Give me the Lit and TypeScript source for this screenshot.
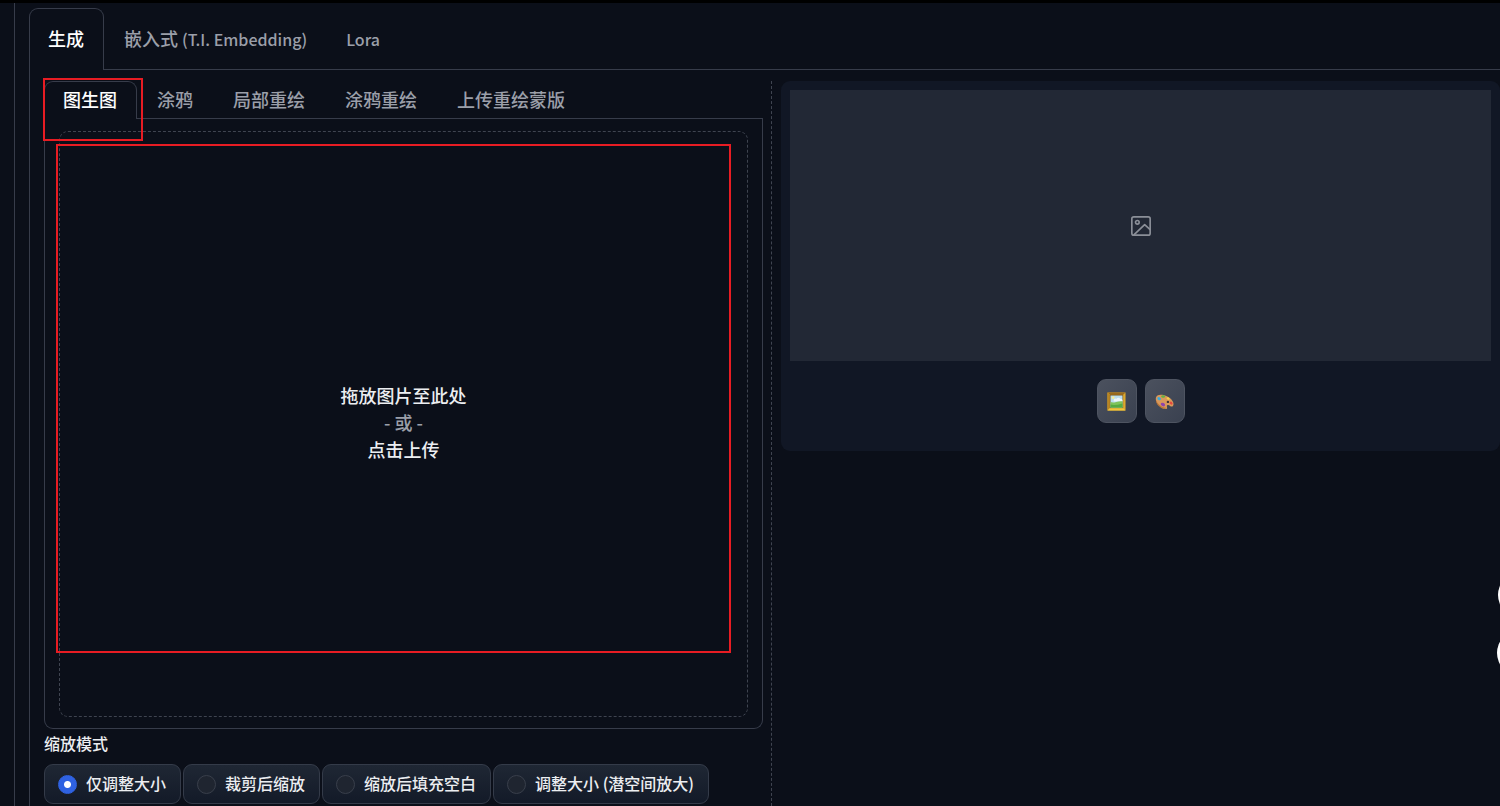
import { LitElement, html, css, svg } from "lit";
import { customElement, state } from "lit/decorators.js";

const imageIcon = svg`
  <svg class="placeholder-icon" viewBox="0 0 24 24" fill="none" stroke="currentColor" stroke-width="1.8" stroke-linecap="round" stroke-linejoin="round" aria-hidden="true">
    <rect x="2" y="2" width="20" height="20" rx="2.2"></rect>
    <circle cx="8" cy="8" r="2"></circle>
    <path d="M4.500 21.500 16 10.500l6 5.500"></path>
  </svg>`;

const frameIcon = svg`
  <svg class="emoji" viewBox="0 0 20 20" aria-hidden="true">
    <rect x="0.5" y="0.5" width="19" height="19" fill="#dca92f"></rect>
    <path d="M0.5 0.5h19l-3 3h-13z" fill="#9a6a1c"></path>
    <path d="M0.5 0.5l3 3v13l-3 3z" fill="#b98523"></path>
    <path d="M0.5 19.5l3-3h13l3 3z" fill="#f0c63c"></path>
    <rect x="3" y="3" width="14" height="14" fill="#7d591d"></rect>
    <rect x="3.7" y="3.7" width="12.6" height="12.6" fill="#b9def0"></rect>
    <circle cx="6.5" cy="6" r="1.5" fill="#f5ed9b"></circle>
    <path d="M7 8.2q1-2 3-1 2-2.5 4 0 1.5 0 2.3 1.3v1.5H7z" fill="#eef6fa"></path>
    <path d="M3.7 10.6q3 .8 6-.2t6.6-.7v6.6H3.7z" fill="#7fc45b"></path>
    <path d="M3.7 13.2q5 1.2 12.6-1.2v4.3H3.7z" fill="#55ab42"></path>
  </svg>`;

const paletteIcon = svg`
  <svg class="emoji" viewBox="0 0 20 20" aria-hidden="true">
    <path d="M1.2 5.3C2.6 2.2 7.6 2.3 12 4.3c4.600 2.100 7.900 5.800 7.400 9-.3 1.900-1.800 2.500-3.200 1.600-1.300-.9-2.700-1.700-3.500-.6-.8 1.200.8 2.400-.4 3.300-1.500 1-4.800-.1-7.300-2.500C2 12.200-.1 8.300 1.200 5.300z" fill="#d9985a"></path>
    <path d="M1 8.500c1 3.300 5.500 8 10.800 8.200-.1 1-1.400 1.500-3 1C4.600 16.500.6 12 1 8.500z" fill="#b87539"></path>
    <circle cx="13.600" cy="10.400" r="1.300" fill="#3f3437"></circle>
    <ellipse cx="8.600" cy="4.800" rx="2" ry="1.300" fill="#63b345"></ellipse>
    <ellipse cx="4.400" cy="7" rx="2" ry="1.500" fill="#36a9e1" transform="rotate(30 4.400 7)"></ellipse>
    <ellipse cx="13.800" cy="6.900" rx="1.700" ry="1.100" fill="#f3d347" transform="rotate(25 13.800 6.900)"></ellipse>
    <ellipse cx="17" cy="11.700" rx="1.800" ry="1.200" fill="#e4483f" transform="rotate(45 17 11.700)"></ellipse>
    <ellipse cx="8.300" cy="13.200" rx="2.400" ry="1.700" fill="#8e43ad" transform="rotate(25 8.300 13.200)"></ellipse>
  </svg>`;

interface Tab {
  text?: string;
  latin?: string;
}

@customElement("app-root")
export class AppRoot extends LitElement {
  @state() private mainTab = 0;
  @state() private modeTab = 0;
  @state() private resize = 0;

  private mainTabs: Tab[] = [{ text: "生成" }, { text: "嵌入式 ", latin: "(T.I. Embedding)" }, { latin: "Lora" }];
  private modeTabs: Tab[] = ["图生图", "涂鸦", "局部重绘", "涂鸦重绘", "上传重绘蒙版"].map((text) => ({ text }));
  private resizeModes = ["仅调整大小", "裁剪后缩放", "缩放后填充空白", "调整大小 (潜空间放大)"];

  static styles = css`
    :host {
      --bg: #0b0f19;
      --line: #373c4a;
      --muted: #9b9fa9;
      display: block;
      position: relative;
      box-sizing: border-box;
      min-height: 100vh;
      overflow: hidden;
      background: var(--bg);
      border-top: 3px solid #000;
      color: #eceef1;
      font-family: "Noto Sans CJK SC", "Noto Sans", sans-serif;
      font-size: 18px;
      font-weight: 500;
    }
    *, *::before { box-sizing: border-box; }
    button { font: inherit; color: inherit; cursor: pointer; }
    .shell {
      min-height: calc(100vh - 3px);
      margin-left: 14px;
      padding: 5px 0 0 14px;
      border-left: 1px solid var(--line);
      display: flex;
      flex-direction: column;
    }
    .tabs { display: flex; }
    .tabs::after { content: ""; flex: 1; border-bottom: 1px solid var(--line); }
    .tab {
      padding: 0 20px 2px;
      background: none;
      border: 0 solid var(--line);
      border-bottom-width: 1px;
      color: var(--muted);
      white-space: pre;
    }
    .main .tab { height: 62px; }
    .mode .tab { height: 38px; }
    .tab.on {
      padding: 0 19px 4px 18px;
      color: #fff;
      border-width: 1px 1px 0;
      border-radius: 9px 9px 0 0;
    }
    .main .tab:not(.on) { padding-right: 19px; }
    .latin { font-size: 16px; }
    .content {
      flex: 1;
      display: grid;
      grid-template-columns: minmax(0, 1fr) 18px minmax(0, 1fr);
      padding: 11px 0 0 14px;
      border-left: 1px solid var(--line);
    }
    .divider { margin-left: 8px; border-left: 1px dashed #3f4450; }
    .mode { position: relative; }
    .upload {
      padding: 12px 14px 11px;
      border: 1px solid var(--line);
      border-top: 0;
      border-radius: 0 0 9px 9px;
      position: relative;
    }
    .drop {
      display: flex;
      flex-direction: column;
      align-items: center;
      justify-content: center;
      width: 100%;
      height: 586px;
      padding: 0 0 4px;
      background: none;
      border: 1px dashed #3f4450;
      border-radius: 9px;
      line-height: 27px;
    }
    .or { color: var(--muted); }
    .mark { position: absolute; border: 2px solid #e81c23; pointer-events: none; z-index: 1; }
    .mark-tab { left: -1px; top: -3px; width: 100px; height: 63px; }
    .mark-drop { left: 11px; right: 31px; top: 25px; height: 509px; }
    fieldset { margin: 0; padding: 0; border: 0; font-size: 16px; min-width: 0; }
    legend { padding: 2px 0 9px; line-height: 24px; }
    .options { display: flex; flex-wrap: wrap; gap: 2px; }
    .option {
      display: flex;
      align-items: center;
      gap: 9px;
      height: 40px;
      padding: 0 14px 0 13px;
      border: 1px solid #343b49;
      border-radius: 9px;
      background: linear-gradient(#1f2734, #131a28);
      line-height: 22px;
      white-space: nowrap;
      cursor: pointer;
    }
    .option span { padding-bottom: 2px; }
    .option input {
      appearance: none;
      width: 19px;
      height: 19px;
      margin: 0;
      border: 1px solid #393f4b;
      border-radius: 50%;
      background: #1f2530;
    }
    .option input:checked {
      border-color: #2f62e2;
      background: radial-gradient(circle, #fff 3px, #2f62e2 4px);
    }
    .result {
      align-self: start;
      padding: 9px 9px 28px;
      border-radius: 9px;
      background: #111725;
    }
    .gallery {
      display: flex;
      align-items: center;
      justify-content: center;
      height: 271px;
      background: #222835;
      color: #8b8f98;
    }
    .placeholder-icon { width: 22px; height: 22px; }
    .actions { display: flex; justify-content: center; gap: 8px; margin-top: 18px; }
    .action {
      display: flex;
      align-items: center;
      justify-content: center;
      width: 40px;
      height: 44px;
      padding: 0;
      border: 1px solid #4e5461;
      border-radius: 9px;
      background: linear-gradient(to bottom right, #4b515e, #3a4150);
    }
    .emoji { width: 19px; height: 19px; }
    .progress { position: absolute; top: -2px; left: 634px; width: 23px; height: 2px; background: #3e63e8; }
    .float { position: absolute; width: 46px; height: 46px; padding: 0; border: 0; border-radius: 50%; background: #fff; }
    .float-a { top: 569px; right: -44px; }
    .float-b { top: 627px; right: -43px; }
  `;

  private tabs(kind: string, items: Tab[], active: number, pick: (i: number) => void) {
    return html`<div class="tabs ${kind}" role="tablist">
      ${items.map(
        (item, i) => html`<button class="tab ${i === active ? "on" : ""}" role="tab" aria-selected=${i === active} @click=${() => pick(i)}>${item.text ?? ""}${item.latin ? html`<span class="latin">${item.latin}</span>` : ""}</button>`
      )}
    </div>`;
  }

  render() {
    return html`
      <div class="progress"></div>
      <main class="shell">
        ${this.tabs("main", this.mainTabs, this.mainTab, (i) => (this.mainTab = i))}
        <div class="content">
          <section>
            <div class="mode">
              ${this.tabs("mode", this.modeTabs, this.modeTab, (i) => (this.modeTab = i))}
              <div class="mark mark-tab"></div>
            </div>
            <div class="upload">
              <button class="drop">
                <span>拖放图片至此处</span>
                <span class="or">- 或 -</span>
                <span>点击上传</span>
              </button>
              <div class="mark mark-drop"></div>
            </div>
            <fieldset>
              <legend>缩放模式</legend>
              <div class="options">
                ${this.resizeModes.map(
                  (name, i) => html`<label class="option">
                    <input type="radio" name="resize" .checked=${i === this.resize} @change=${() => (this.resize = i)} />
                    <span>${name}</span>
                  </label>`
                )}
              </div>
            </fieldset>
          </section>
          <div class="divider"></div>
          <section class="result">
            <div class="gallery">${imageIcon}</div>
            <div class="actions">
              <button class="action" aria-label="图片">${frameIcon}</button>
              <button class="action" aria-label="调色板">${paletteIcon}</button>
            </div>
          </section>
        </div>
      </main>
      <button class="float float-a" aria-label="工具"></button>
      <button class="float float-b" aria-label="菜单"></button>
    `;
  }
}
